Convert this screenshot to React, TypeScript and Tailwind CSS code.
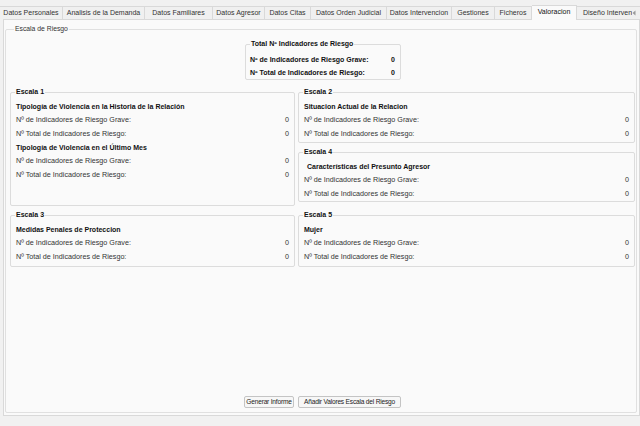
import type { ReactNode } from "react";

const TABS: { label: string; w: number }[] = [
    { label: "Datos Personales", w: 63 },
    { label: "Analisis de la Demanda", w: 82 },
    { label: "Datos Familiares", w: 68 },
    { label: "Datos Agresor", w: 52 },
    { label: "Datos Citas", w: 46 },
    { label: "Datos Orden Judicial", w: 76 },
    { label: "Datos Intervencion", w: 65 },
    { label: "Gestiones", w: 43 },
    { label: "Ficheros", w: 37 },
    { label: "Valoracion", w: 45 },
];

const SELECTED = "Valoracion";

function Group({ title, className, children }: { title: string; className?: string; children: ReactNode }) {
    return (
        <fieldset className={`border border-[#dcdcdc] rounded-[2px] min-w-0 ${className ?? ""}`}>
            <legend className="ml-[4px] px-[1px] font-bold text-[7px] leading-[10px] text-[#111]">{title}</legend>
            {children}
        </fieldset>
    );
}

function Subtitle({ children, first }: { children: ReactNode; first?: boolean }) {
    return (
        <div className={`${first ? "mt-[5px]" : "mt-[3px]"} pl-[5px] font-bold text-[7px] leading-[10px] text-[#111] whitespace-nowrap`}>
            {children}
        </div>
    );
}

function Row({ label, value = 0 }: { label: string; value?: number }) {
    return (
        <div className="mt-[2px] flex justify-between pl-[5px] pr-[5px] leading-[12px] text-[#333]">
            <span className="whitespace-nowrap">{label}</span>
            <span>{value}</span>
        </div>
    );
}

function Pair() {
    return (
        <>
            <Row label="Nº de Indicadores de Riesgo Grave:" />
            <Row label="Nº Total de Indicadores de Riesgo:" />
        </>
    );
}

export default function App() {
    return (
        <div
            className="w-[640px] h-[426px] overflow-hidden bg-[#f1f1f1] text-[7.2px] text-[#222]"
            style={{ fontFamily: '"Liberation Sans", Arial, sans-serif' }}
        >
            {/* Tabs */}
            <div className="flex items-end h-[19px] text-[7px]">
                {TABS.map((t) => {
                    const sel = t.label === SELECTED;
                    return (
                        <div
                            key={t.label}
                            style={{ width: t.w }}
                            className={`shrink-0 flex items-center justify-center whitespace-nowrap overflow-hidden border-t border-r border-[#d9d9d9] ${sel
                                    ? "h-[15px] bg-[#fafafa] relative z-10 -mb-px pb-[2px] text-[#111]"
                                    : "h-[13px] bg-[#f0f0f0] text-[#333]"
                                }`}
                        >
                            {t.label}
                        </div>
                    );
                })}
                <div className="shrink-0 w-[55px] h-[13px] flex items-center pl-[6px] whitespace-nowrap border-t border-[#d9d9d9] bg-[#f0f0f0] text-[#333]">
                    Diseño Intervenc
                </div>
                <div className="shrink-0 w-[8px] h-[13px] flex items-center border-t border-[#d9d9d9] bg-[#f0f0f0]">
                    <svg width="4" height="6" viewBox="0 0 4 6">
                        <path d="M3.5 0.5 L0.5 3 L3.5 5.5 Z" fill="#9a9a9a" />
                    </svg>
                </div>
            </div>

            {/* Tab page */}
            <div className="ml-[3px] h-[397px] border border-[#d9d9d9] bg-[#fafafa] pt-[4px] pl-[1px]">
                <fieldset className="w-[632px] h-[389px] border border-[#e0e0e0] rounded-[2px] min-w-0 flex flex-col pl-[4px] pr-[1px]">
                    <legend className="ml-[4px] px-[1px] leading-[10px] text-[6.8px] text-[#333]">Escala de Riesgo</legend>

                    {/* Totals */}
                    <Group title="Total Nº Indicadores de Riesgo" className="ml-[235px] mt-[5px] w-[156px] h-[41px]">
                        <div className="mt-[4px] flex justify-between pl-[4px] pr-[5px] leading-[13px] font-bold text-[7px] text-[#111]">
                            <span>Nº de Indicadores de Riesgo Grave:</span>
                            <span>0</span>
                        </div>
                        <div className="flex justify-between pl-[4px] pr-[5px] leading-[13px] font-bold text-[7px] text-[#111]">
                            <span>Nº Total de Indicadores de Riesgo:</span>
                            <span>0</span>
                        </div>
                    </Group>

                    <div className="mt-[7px] grid grid-cols-[285px_337px] gap-x-[3px]">
                        <Group title="Escala 1" className="h-[119px]">
                            <Subtitle first>Tipología de Violencia en la Historia de la Relación</Subtitle>
                            <Pair />
                            <Subtitle>Tipología de Violencia en el Último Mes</Subtitle>
                            <Pair />
                        </Group>

                        <div className="flex flex-col gap-[4px]">
                            <Group title="Escala 2" className="h-[56px]">
                                <Subtitle first>Situacion Actual de la Relacion</Subtitle>
                                <Pair />
                            </Group>
                            <Group title="Escala 4" className="h-[55px]">
                                <Subtitle first>
                                    <span className="pl-[3px]">Características del Presunto Agresor</span>
                                </Subtitle>
                                <Pair />
                            </Group>
                        </div>
                    </div>

                    <div className="mt-[4px] grid grid-cols-[285px_337px] gap-x-[3px]">
                        <Group title="Escala 3" className="h-[57px]">
                            <Subtitle first>Medidas Penales de Proteccion</Subtitle>
                            <Pair />
                        </Group>
                        <Group title="Escala 5" className="h-[57px]">
                            <Subtitle first>Mujer</Subtitle>
                            <Pair />
                        </Group>
                    </div>

                    {/* Actions */}
                    <div className="mt-auto mb-[4px] flex justify-center gap-[4px] text-[6.6px] tracking-[-0.2px]">
                        <button
                            type="button"
                            className="w-[50px] h-[12px] leading-[10px] rounded-[2px] border border-[#c4c4c4] bg-[#f7f7f7] text-[#222] whitespace-nowrap overflow-hidden"
                        >
                            Generar Informe
                        </button>
                        <button
                            type="button"
                            className="w-[103px] h-[12px] leading-[10px] rounded-[2px] border border-[#c4c4c4] bg-[#f7f7f7] text-[#222] whitespace-nowrap overflow-hidden"
                        >
                            Añadir Valores Escala del Riesgo
                        </button>
                    </div>
                </fieldset>
            </div>
        </div>
    );
}
